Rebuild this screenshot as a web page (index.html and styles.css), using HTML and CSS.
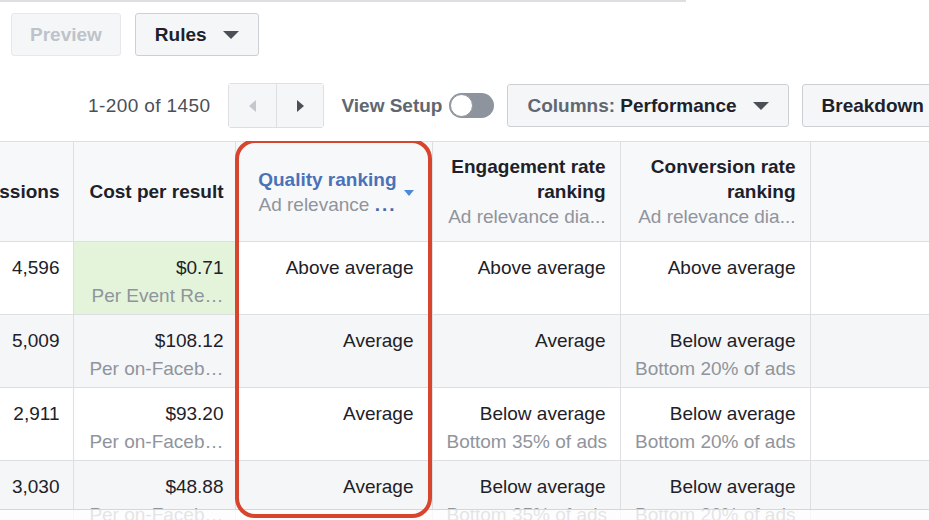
FILE: index.html
```html
<!doctype html>
<html lang="en">
<head>
    <meta charset="UTF-8">
    <meta name="viewport" content="width=device-width, initial-scale=1.0">
    <link rel="stylesheet" href="styles.css">
    <title>Ads Manager</title>
</head>
<body>
<div class="topline"></div>
<div class="bar">
    <button class="btn btn-off">Preview</button>
    <button class="btn">Rules <span class="caret"></span></button>
</div>
<div class="bar bar-view">
    <span class="count">1-200 of 1450</span>
    <div class="pager">
        <button class="pg"><span class="arr arr-left"></span></button>
        <button class="pg"><span class="arr arr-right"></span></button>
    </div>
    <span class="view-setup">View Setup</span>
    <span class="toggle"><span class="knob"></span></span>
    <button class="btn btn-cols"><span class="muted">Columns:</span>&nbsp;Performance <span class="caret"></span></button>
    <button class="btn btn-break">Breakdown</button>
</div>
<div class="grid-wrap">
    <table class="grid">
        <colgroup>
            <col style="width:145px">
            <col style="width:162px">
            <col style="width:197px">
            <col style="width:188px">
            <col style="width:190px">
            <col>
        </colgroup>
        <thead>
        <tr>
            <th>Impressions</th>
            <th>Cost per result</th>
            <th class="sorted">
                <div class="sort">
                    <div>
                        <div class="sort-title">Quality ranking</div>
                        <div class="sub">Ad relevance <b class="dots">...</b></div>
                    </div>
                    <span class="caret-sm"></span>
                </div>
            </th>
            <th>Engagement rate<br>ranking<div class="sub">Ad relevance dia...</div></th>
            <th>Conversion rate<br>ranking<div class="sub">Ad relevance dia...</div></th>
            <th class="blank"></th>
        </tr>
        </thead>
        <tbody>
        <tr>
            <td>4,596</td>
            <td class="best">$0.71<div class="sub">Per Event Re…</div></td>
            <td>Above average</td>
            <td>Above average</td>
            <td>Above average</td>
            <td class="blank"></td>
        </tr>
        <tr>
            <td>5,009</td>
            <td>$108.12<div class="sub">Per on-Faceb…</div></td>
            <td>Average</td>
            <td>Average</td>
            <td>Below average<div class="sub">Bottom 20% of ads</div></td>
            <td class="blank"></td>
        </tr>
        <tr>
            <td>2,911</td>
            <td>$93.20<div class="sub">Per on-Faceb…</div></td>
            <td>Average</td>
            <td>Below average<div class="sub">Bottom 35% of ads</div></td>
            <td>Below average<div class="sub">Bottom 20% of ads</div></td>
            <td class="blank"></td>
        </tr>
        <tr>
            <td>3,030</td>
            <td>$48.88<div class="sub">Per on-Faceb…</div></td>
            <td>Average</td>
            <td>Below average<div class="sub">Bottom 35% of ads</div></td>
            <td>Below average<div class="sub">Bottom 20% of ads</div></td>
            <td class="blank"></td>
        </tr>
        </tbody>
    </table>
    <div class="scroll-fade"></div>
    <div class="highlight"></div>
</div>
</body>
</html>
```

FILE: styles.css
```css
html, body {
    height: 100%;
}

body {
    margin: 0;
    overflow: hidden;
    background: #fff;
    color: #1d2129;
    font-family: "Liberation Sans", Arial, sans-serif;
    font-size: 19px;
}

.topline {
    width: 686px;
    height: 2px;
    background: #dcdee1;
}

.bar {
    display: flex;
    align-items: center;
    padding: 11px 0 0 11px;
}

.bar > * {
    flex-shrink: 0;
}

.bar-view {
    padding: 27px 0 0 88px;
}

.btn {
    display: inline-flex;
    align-items: center;
    height: 43px;
    padding: 0 19px;
    margin-right: 14px;
    border: 1px solid #ccd0d5;
    border-radius: 3px;
    background: #f5f6f7;
    color: #1d2129;
    font: bold 19px "Liberation Sans", Arial, sans-serif;
    white-space: nowrap;
}

.btn-off {
    padding: 0 18px;
    border-color: #e6e8eb;
    color: #bec3c9;
}

.caret {
    display: inline-block;
    width: 0;
    height: 0;
    margin-left: 16px;
    border-left: 8px solid transparent;
    border-right: 8px solid transparent;
    border-top: 8px solid #4b4f56;
}

.count {
    color: #4b4f56;
    margin-right: 18px;
    white-space: nowrap;
    letter-spacing: .4px;
}

.pager {
    display: flex;
    height: 43px;
    border: 1px solid #dddfe2;
    border-radius: 3px;
    margin-right: 17px;
}

.pg {
    width: 47px;
    height: 100%;
    border: none;
    background: #f5f6f7;
    display: flex;
    align-items: center;
    justify-content: center;
}

.pg + .pg {
    border-left: 1px solid #dddfe2;
}

.arr {
    width: 0;
    height: 0;
    border-top: 6px solid transparent;
    border-bottom: 6px solid transparent;
}

.arr-left {
    border-right: 7px solid #c4c7cc;
}

.arr-right {
    border-left: 7px solid #4b4f56;
}

.view-setup {
    color: #606770;
    font-weight: bold;
    white-space: nowrap;
    margin-right: 7px;
}

.toggle {
    display: flex;
    align-items: center;
    width: 45px;
    height: 25px;
    box-sizing: border-box;
    padding: 1px;
    border-radius: 13px;
    background: #8d949e;
    margin-right: 13px;
}

.knob {
    width: 23px;
    height: 23px;
    box-sizing: border-box;
    border-radius: 50%;
    background: #fff;
    border: 1px solid #8d949e;
}

.btn-cols {
    margin-right: 13px;
}

.muted {
    color: #606770;
}

.btn-break {
    margin-right: 0;
    padding-right: 40px;
}

.grid-wrap {
    position: relative;
    margin-top: 13px;
    height: 381px;
    overflow: hidden;
}

.grid {
    margin-left: -72px;
    width: 1001px;
    table-layout: fixed;
    border-collapse: collapse;
}

.grid th, .grid td {
    text-align: right;
    white-space: nowrap;
    overflow: hidden;
    border-right: 1px solid #dddfe2;
    border-bottom: 1px solid #dddfe2;
}

.grid th {
    height: 99px;
    padding: 0 14px;
    line-height: 25px;
    background: #f7f8fa;
    border-top: 1px solid #dddfe2;
    vertical-align: middle;
}

.grid th.sorted {
    padding-right: 18px;
}

.grid td {
    height: 73px;
    padding: 12px 14px 0;
    box-sizing: border-box;
    line-height: 28px;
    vertical-align: top;
}

.grid th:nth-child(1), .grid td:nth-child(1) {
    padding-right: 13px;
}

.grid th:nth-child(2), .grid td:nth-child(2) {
    padding-right: 11px;
}

.grid td:nth-child(3) {
    padding-right: 18px;
}

.grid td.best {
    background: #e3f4da;
}

.grid tbody tr:nth-child(even) td {
    background: #f5f6f7;
}

.grid th.blank, .grid td.blank {
    border-right: none;
}

.sub {
    color: #90949c;
    font-weight: normal;
}

.sort {
    display: flex;
    justify-content: flex-end;
    align-items: center;
}

.sort-title {
    color: #4a72b8;
}

.dots {
    color: #4a6aa5;
    letter-spacing: 2px;
}

.caret-sm {
    width: 0;
    height: 0;
    margin-left: 7px;
    margin-top: 2px;
    border-left: 5px solid transparent;
    border-right: 5px solid transparent;
    border-top: 6px solid #4a8bd6;
}

.scroll-fade {
    position: absolute;
    left: 0;
    right: 0;
    top: 368px;
    height: 13px;
    background: rgba(255, 255, 255, .75);
    border-top: 1px solid #d3d6da;
}

.highlight {
    position: absolute;
    left: 235px;
    top: -2px;
    width: 197px;
    height: 379px;
    box-sizing: border-box;
    border: 4px solid #d8452e;
    border-radius: 20px;
}
```
